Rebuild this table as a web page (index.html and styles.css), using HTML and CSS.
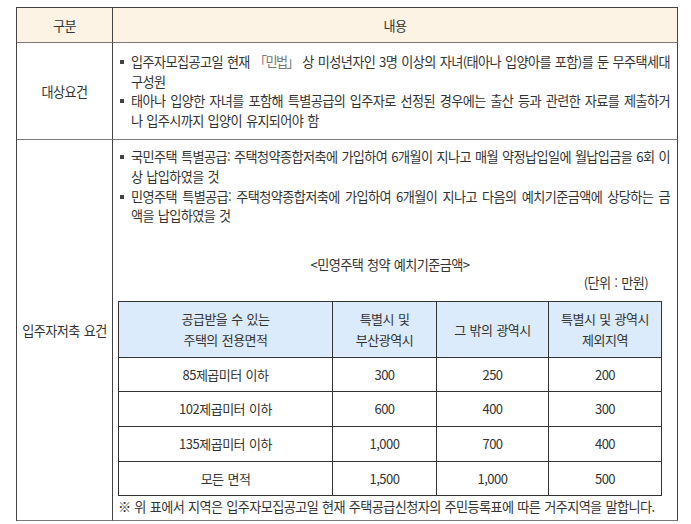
FILE: index.html
```html
<!DOCTYPE html>
<html lang="ko">
<head>
<meta charset="utf-8">
<title>다자녀 특별공급 요건</title>
<link rel="stylesheet" href="styles.css">
</head>
<body>
<div class="page">
  <div class="frame">
    <div class="cell head">구분</div>
    <div class="cell head">내용</div>

    <div class="cell label">대상요건</div>
    <div class="cell content r1">
      <ul class="list">
        <li><span class="mark"></span><span class="txt"><span class="ln">입주자모집공고일 현재 <span class="law">「민법」</span> 상 미성년자인 3명 이상의 자녀(태아나 입양아를 포함)를 둔 무주택세대</span>구성원</span></li>
        <li><span class="mark"></span><span class="txt"><span class="ln">태아나 입양한 자녀를 포함해 특별공급의 입주자로 선정된 경우에는 출산 등과 관련한 자료를 제출하거</span>나 입주시까지 입양이 유지되어야 함</span></li>
      </ul>
    </div>

    <div class="cell label">입주자저축 요건</div>
    <div class="cell content r2">
      <ul class="list">
        <li><span class="mark"></span><span class="txt"><span class="ln">국민주택 특별공급: 주택청약종합저축에 가입하여 6개월이 지나고 매월 약정납입일에 월납입금을 6회 이</span>상 납입하였을 것</span></li>
        <li><span class="mark"></span><span class="txt"><span class="ln">민영주택 특별공급: 주택청약종합저축에 가입하여 6개월이 지나고 다음의 예치기준금액에 상당하는 금</span>액을 납입하였을 것</span></li>
      </ul>
      <div class="caption">&lt;민영주택 청약 예치기준금액&gt;</div>
      <div class="unit">(단위 : 만원)</div>
      <div class="amounts">
        <div class="th">공급받을 수 있는<br>주택의 전용면적</div>
        <div class="th">특별시 및<br>부산광역시</div>
        <div class="th">그 밖의 광역시</div>
        <div class="th">특별시 및 광역시<br>제외지역</div>

        <div>85제곱미터 이하</div>
        <div>300</div>
        <div>250</div>
        <div>200</div>

        <div>102제곱미터 이하</div>
        <div>600</div>
        <div>400</div>
        <div>300</div>

        <div>135제곱미터 이하</div>
        <div>1,000</div>
        <div>700</div>
        <div>400</div>

        <div>모든 면적</div>
        <div>1,500</div>
        <div>1,000</div>
        <div>500</div>
      </div>
      <div class="note">※ 위 표에서 지역은 입주자모집공고일 현재 주택공급신청자의 주민등록표에 따른 거주지역을 말합니다.</div>
    </div>
  </div>
</div>
</body>
</html>
```
FILE: styles.css
```css
* {
  box-sizing: border-box;
}

body {
  margin: 0;
  background: #ffffff;
  font-family: "Noto Sans CJK KR", "Noto Sans", sans-serif;
  font-size: 13.15px;
  letter-spacing: -0.6px;
  word-spacing: 0.75px;
  color: #333333;
}

.page {
  padding: 7px 0 0 16px;
}

.frame {
  display: grid;
  grid-template-columns: 96px 565px;
  width: 662px;
  border-top: 1px solid #444444;
  border-left: 1px solid #444444;
}

.cell {
  border-right: 1px solid #444444;
  border-bottom: 1px solid #7a7a7a;
}

.head {
  height: 35px;
  background: #fdf3e4;
  display: flex;
  align-items: center;
  justify-content: center;
}

.label {
  display: flex;
  align-items: center;
  justify-content: center;
}

.content.r1 {
  padding: 9px 5px 9px 5px;
}

.content.r2 {
  padding: 7px 5px 4px 5px;
}

.list {
  margin: 0;
  padding: 0;
  list-style: none;
  line-height: 19.6px;
}

.list li {
  display: flex;
}

.mark {
  flex: 0 0 13px;
}

.mark::before {
  content: "";
  display: block;
  width: 4px;
  height: 4px;
  margin: 8px 0 0 2px;
  background: #444444;
}

.txt {
  flex: 0 0 539px;
  text-align: left;
}

.ln {
  display: block;
  white-space: nowrap;
  text-align: justify;
  text-align-last: justify;
}

.law {
  color: #777777;
  letter-spacing: -1.6px;
}

.caption {
  width: 544px;
  margin-top: 30px;
  line-height: 18px;
  text-align: center;
}

.unit {
  width: 544px;
  padding-right: 14px;
  line-height: 18px;
  text-align: right;
}

.amounts {
  display: grid;
  width: 544px;
  margin-top: 9px;
  grid-template-columns: 214px 104px 112px 113px;
  grid-template-rows: 56px 34px 35px 35px 34px;
  border-top: 1px solid #333333;
  border-left: 1px solid #333333;
  font-size: 13px;
  letter-spacing: -0.5px;
}

.amounts > div {
  display: flex;
  align-items: center;
  justify-content: center;
  text-align: center;
  border-right: 1px solid #333333;
  border-bottom: 1px solid #333333;
}

.amounts .th {
  background: #dcebfb;
  line-height: 21px;
}

.note {
  margin-top: 2px;
  line-height: 18px;
}
```
